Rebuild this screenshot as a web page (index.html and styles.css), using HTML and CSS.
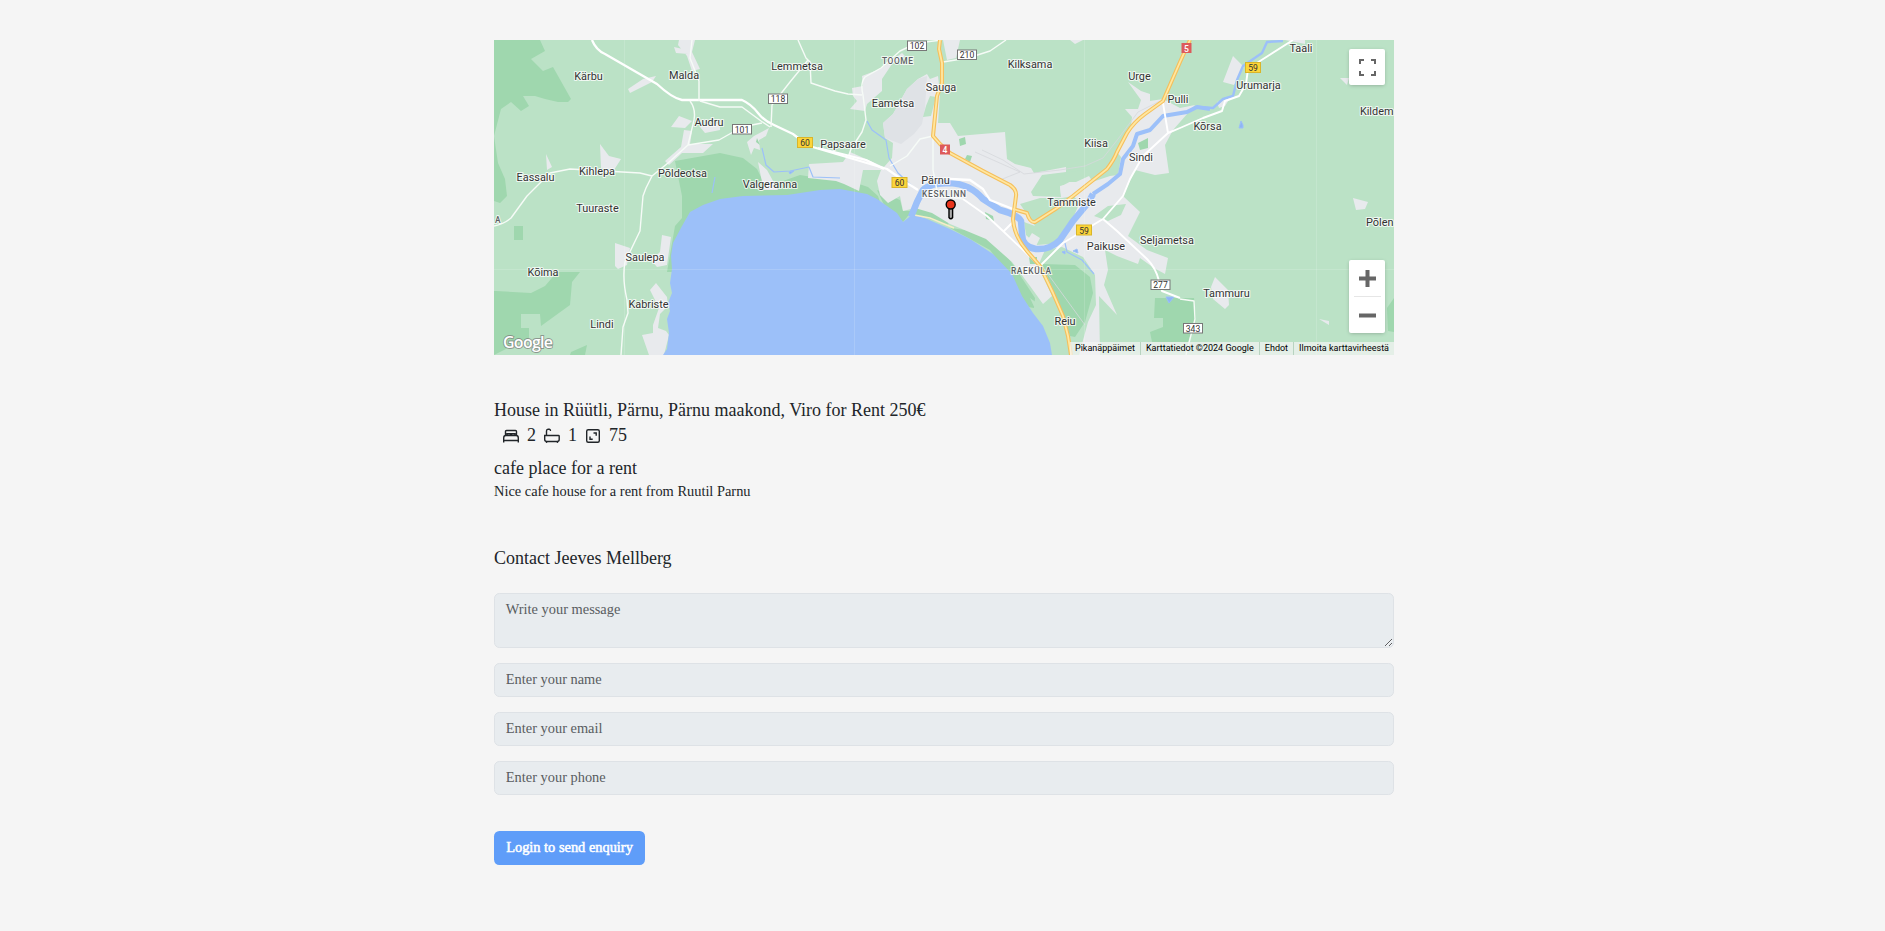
FILE: index.html
```html
<!DOCTYPE html>
<html lang="en">
<head>
<meta charset="utf-8">
<title>House in Rüütli, Pärnu</title>
<link rel="stylesheet" href="styles.css">
</head>
<body>
<main class="listing">
  <section class="map">
    <svg class="map-canvas" viewBox="494 40 900 315" width="900" height="315">
      <rect class="land" x="494" y="40" width="900" height="315"/>
      <g class="forest">
        <path d="M494 40H540L545 51 531 59 543 71 553 67 571 99 568 102 558 102 545 99 535 96 523 96 529 106 521 111 511 102 501 109 494 136Z"/>
        <path d="M494 136L498 163 505 179 507 196 500 203 494 201Z"/>
        <path d="M514 226H523V240H514Z"/>
        <path d="M496 291L531 293 545 286 557 272 580 272 572 282 570 305 541 326 540 314 521 314V328L529 328V338L512 346 494 355V291Z"/>
        <path d="M571 352L587 345 585 355H570Z"/>
        <path d="M675 161L720 153 743 158 757 169 766 187 800 175 812 177 850 181 868 187 878 196 880 202 840 195 740 200 700 212 680 232 672 272H667L675 226 682 218V196Z"/>
        <path d="M877 190L900 200 903 211H912L903 222 885 207Z"/>
        <path d="M916 199L930 203 950 212 948 225 914 214Z"/>
        <path d="M950 228L980 232 1000 246 1014 266 1035 298 1034 308 1028 307 1012 280 990 250Z"/>
        <path d="M1155 298H1194L1196 318 1188 342H1152L1150 332 1163 327V318H1154Z"/>
        <path d="M1387 308L1394 298V332L1388 331Z"/>
      </g>
      <g class="town">
        <path d="M679 40H695L692 52 700 69 692 71 687 56 678 45ZM674 47L687 50 688 54 676 53ZM628 89L643 79 656 76 652 82 630 93Z"/>
        <path d="M671 127L679 116 692 121 685 128ZM684 130L692 131 690 144 713 144 703 153 682 153 669 165 665 161 681 147ZM700 127L720 123V130L705 133Z"/>
        <path d="M600 144L609 156 621 159 614 170 601 168ZM546 154L552 167 547 170Z"/>
        <path d="M615 243L630 248 627 265 618 269 615 266ZM662 235L671 237 667 265 657 267 651 260 660 252ZM650 290L656 283 667 297 668 306 660 314 658 328 666 331 669 335 664 355H649L642 335 653 333 653 325 659 308Z"/>
        <path d="M747 142L754 136 769 128 766 136 759 140 760 150 754 148 751 155ZM758 162L767 170 778 190H764L761 177Z"/>
        <path d="M852 88L863 86 862 76 880 69 902 53 905 56 892 64 882 79V91L867 104 865 111 850 109 857 101 853 96ZM943 40H960L956 58 947 60Z"/>
        <path d="M883 123L893 114 907 89 918 79 927 74 930 79 938 76 940 93 938 123 950 123 958 136 1005 132 1007 159 1015 164 1031 168 1034 173 1066 167V172L1042 175 1031 192 1033 196 1061 197 1060 187 1077 178 1091 177 1107 165 1120 145 1131 126 1132 117 1125 109 1138 109 1141 100 1128 82 1141 91 1150 94V101L1163 99 1180 108 1195 105 1173 130 1165 145 1169 173 1155 175 1135 170 1123 196 1140 212 1128 236 1147 250 1168 258 1165 274 1154 268 1140 258 1138 264 1117 256 1105 250 1108 270 1104 285 1117 315 1099 296 1100 355H1079L1088 322 1096 305 1095 275 1083 257 1062 247 1045 250 1038 266 1052 296 1043 304 1030 286 1012 262 986 239 950 224 932 213 915 208 903 211 900 196 888 203 880 195 877 181 881 170 863 170 859 191 844 184 836 181 808 178 809 164 843 162 850 152 884 167 892 158 893 143 885 138Z"/>
        <path d="M1070 40H1083L1075 44ZM1233 56L1244 67 1234 85 1223 82ZM1217 102L1230 98 1225 106 1219 108ZM1285 40H1305V44ZM1340 78H1349L1347 85Z"/>
        <path d="M1215 277L1228 290 1229 305 1225 309 1213 299 1211 287ZM1319 319L1329 321 1329 325Z"/>
        <path d="M1353 198L1368 202 1365 209 1356 210Z"/>
      </g>
      <path class="airfield" d="M883 123L893 114 907 89 918 79 927 76 925 108 922 124 914 134 901 144 885 138Z"/>
      <g class="land">
        <path d="M930 96L936 97 931 116 923 117 926 106Z"/>
        <path d="M1020 204L1040 198 1062 198 1073 196 1080 202 1062 243 1037 245 1026 235 1024 222 1035 226ZM1094 216L1108 206 1126 204 1121 215 1108 221ZM1102 147L1112 146 1121 157 1118 175 1110 176 1092 182 1063 182 1065 173 1088 169Z"/>
        <path d="M1030 298L1037 303 1047 309 1058 299 1063 320 1070 355H1052L1043 326Z"/>
      </g>
      <path class="town" d="M1027 241L1032 233 1040 238 1036 246ZM1076 182L1089 176 1094 184 1084 195 1061 195 1060 186Z"/>
      <path class="forest" d="M959 139L965 137 966 144 960 146ZM967 155L972 156 970 162 965 159ZM1138 143L1148 138V148L1140 150ZM757 138L760 145 756 142ZM1042 264L1075 265 1090 277 1093 293 1085 322 1075 337 1070 336 1060 306ZM985 212L993 216 994 221 986 219ZM1029 257H1037V264H1030Z"/>
      <path class="sea" d="M720 199L703 205 690 212 682 226 673 243 671 256 672 269 670 283 672 293 668 303 670 311 667 319 669 333 667 349 663 355H1052L1050 343 1043 326 1033 313 1022 296 1012 274 993 254 970 239 950 229 927 219 913 214 903 222 897 213 887 206 877 199 867 194 840 189 820 190 787 195 743 196Z"/>
      <path class="beach" d="M914 215L930 218 954 228"/>
      <g class="river">
        <path class="wide" d="M1093 194L1088 203 1073 221 1060 240Q1050 250 1036 249 1022 247 1022 234L1021 221Q1018 215 1000 210L983 199Q970 184 950 183 930 183 923 190L917 202 911 217"/>
        <path class="mid" d="M1210 109L1197 107 1187 112 1163 116 1150 130 1137 134 1133 146 1123 159 1120 174 1108 184 1093 194"/>
        <path d="M1283 41L1267 42 1262 53 1243 66 1237 80 1233 96 1223 99 1213 108 1197 107"/>
        <path class="thin" d="M867 121L872 130 886 140 889 158 898 173 913 187M762 148L766 165 774 172 790 171 809 167 813 177 840 178M1065 243L1067 252 1082 260 1094 274M715 177L712 193"/>
        <path class="pool" d="M1239 128L1241 121 1243 125V128ZM1073 251L1077 249 1078 253ZM1166 297L1174 297 1169 303ZM789 172L794 171 790 174ZM1062 252L1065 251 1065 254Z"/>
      </g>
      <path class="railway" d="M982 150L1003 160 1024 174 1060 170 1085 166 1103 158 1118 139 1138 112 1160 101M975 152L1020 172 1000 180M1042 266L1085 325"/>
      <g class="road">
        <path class="major" d="M592 40Q596 50 605 54L657 84Q672 98 682 100H742Q751 104 758 113 764 121 774 125L793 134Q799 138 806 145L860 161 887 169 907 183 918 190"/>
        <path class="major" d="M818 148L866 160 884 169M950 179L970 180 983 189 990 200 1013 209"/>
        <path class="medium" d="M1293 40L1260 61 1248 69 1246 84 1239 96 1225 101 1222 111 1203 118 1180 128 1168 133 1143 156 1130 179 1123 196 1103 219 1063 243 1040 266M1163 103L1168 133M1103 219L1117 231 1147 259Q1156 268 1159 281L1162 291 1180 298M963 199L987 216 1003 231 1040 266M1003 232L1013 222 1013 209"/>
        <path d="M933 136L920 139 907 156 890 166M933 136V170L938 196 963 199M1180 299L1194 301 1195 319 1186 355"/>
        <path d="M692 40L690 58 699 81V101M700 101L720 107H742L761 121 770 127M690 101Q696 109 694 120L688 145 668 163 652 176 646 188 643 196 640 231 625 262Q622 278 627 300L628 313 623 327 621 355M688 145L719 140 742 127 762 123M798 40L806 58 810 62 811 83 835 91 848 94 862 95M808 60L790 82 772 105 771 127M942 40 917 43 900 51 881 68 865 77Q860 83 863 95L866 120 862 132 851 149 849 155M652 176L640 173 570 169 550 173 540 183 527 196 511 218Q504 224 494 226M943 62L968 58 990 51 1006 40"/>
      </g>
      <g class="highway" id="highways">
        <path id="hw4" d="M940 40L939 49 942 63V83L937 96 933 136 940 144 950 153 983 171 1010 185Q1017 190 1016 196L1013 219Q1014 236 1027 251L1040 266 1053 293 1063 316 1068 336 1071 355"/>
        <path id="hw59" d="M1013 209L1027 213Q1030 223 1035 222L1057 208 1073 196 1107 169Q1114 160 1117 152L1127 133Q1134 122 1145 114L1163 101 1180 62 1190 40"/>
      </g>
      <g class="highway-core">
        <path d="M940 40L939 49 942 63V83L937 96 933 136 940 144 950 153 983 171 1010 185Q1017 190 1016 196L1013 219Q1014 236 1027 251L1040 266 1053 293 1063 316 1068 336 1071 355"/>
        <path d="M1013 209L1027 213Q1030 223 1035 222L1057 208 1073 196 1107 169Q1114 160 1117 152L1127 133Q1134 122 1145 114L1163 101 1180 62 1190 40"/>
      </g>
      <path class="tile-seams" d="M494 269.5H1394M624.500 40V355M854.500 40V355M1084.500 40V355M1316.500 40V355"/>
      <g class="shield">
        <rect x="907.500" y="41" width="19" height="9.500"/><text x="917" y="49">102</text>
        <rect x="957.500" y="50" width="19" height="9.500"/><text x="967" y="58">210</text>
        <rect x="768.500" y="94" width="19" height="9.500"/><text x="778" y="102">118</text>
        <rect x="732.500" y="124.500" width="19" height="9.500"/><text x="742" y="132.500">101</text>
        <rect x="1151" y="280" width="19" height="9.500"/><text x="1160.500" y="288">277</text>
        <rect x="1183.500" y="323.500" width="19" height="9.500"/><text x="1193" y="331.500">343</text>
      </g>
      <g class="shield yellow">
        <rect x="797.500" y="137.500" width="15" height="10"/><text x="805" y="146">60</text>
        <rect x="892" y="177.500" width="15" height="10"/><text x="899.500" y="186">60</text>
        <rect x="1245.500" y="62.500" width="15" height="10"/><text x="1253" y="71">59</text>
        <rect x="1076.500" y="225" width="15" height="10"/><text x="1084" y="233.500">59</text>
      </g>
      <g class="shield red">
        <rect x="940.500" y="145" width="9" height="9"/><text x="945" y="153">4</text>
        <rect x="1182" y="43.500" width="9" height="9"/><text x="1186.500" y="51.500">5</text>
      </g>
      <g class="place">
        <text x="588.500" y="80">Kärbu</text><text x="684" y="78.500">Malda</text>
        <text x="709" y="126">Audru</text><text x="597" y="175">Kihlepa</text>
        <text x="535.500" y="181">Eassalu</text><text x="682.500" y="176.500">Põldeotsa</text>
        <text x="797" y="69.500">Lemmetsa</text><text x="893" y="106.500">Eametsa</text>
        <text x="941" y="91">Sauga</text><text x="843" y="148">Papsaare</text>
        <text x="770" y="188">Valgeranna</text><text x="935.500" y="184">Pärnu</text>
        <text x="1030" y="68">Kilksama</text><text x="1139.500" y="80">Urge</text>
        <text x="1178" y="103">Pulli</text><text x="1096" y="147">Kiisa</text>
        <text x="1141" y="160.500">Sindi</text><text x="1301" y="51.500">Taali</text>
        <text x="1258.500" y="88.500">Urumarja</text><text x="1207.500" y="129.500">Kõrsa</text>
        <text x="597.500" y="212">Tuuraste</text><text x="645" y="261">Saulepa</text>
        <text x="543" y="275.500">Kõima</text><text x="648.500" y="308">Kabriste</text>
        <text x="602" y="327.500">Lindi</text><text x="1071.500" y="206">Tammiste</text>
        <text x="1106" y="250">Paikuse</text><text x="1167" y="244">Seljametsa</text>
        <text x="1065" y="325">Reiu</text><text x="1226.500" y="297">Tammuru</text>
        <text class="at-edge" x="1393.500" y="114.500">Kildem</text><text class="at-edge" x="1393.500" y="226">Põlen</text>
      </g>
      <g class="district">
        <text x="882" y="64" textLength="31">TOOME</text>
        <text x="922" y="197" textLength="44">KESKLINN</text>
        <text x="1011" y="274" textLength="40">RAEKÜLA</text>
        <text x="495" y="223">A</text>
      </g>
      <g class="pin">
        <path class="pin-stem" d="M949 207H952.600V217.500Q950.800 220 949 217.500Z"/>
        <circle cx="950.700" cy="204.500" r="4.500"/>
      </g>
      <text class="google" x="503" y="348" textLength="50">Google</text>
    </svg>
    <button class="map-control fullscreen" aria-label="Fullscreen">
      <svg width="18" height="18" viewBox="0 0 18 18"><path d="M2 6V2H6M13 2H17V6M17 13V17H13M6 17H2V13"/></svg>
    </button>
    <div class="map-control zoom">
      <svg width="36" height="36" viewBox="0 0 36 36"><path d="M10 18.500H27M18.500 10V27"/></svg>
      <span class="zoom-divider"></span>
      <svg width="36" height="36" viewBox="0 0 36 36"><path d="M10 18.500H27"/></svg>
    </div>
    <div class="attribution"><span>Pikanäppäimet</span><span>Karttatiedot ©2024 Google</span><span>Ehdot</span><span>Ilmoita karttavirheestä</span></div>
  </section>

  <section class="details">
    <h1 class="title">House in Rüütli, Pärnu, Pärnu maakond, Viro for Rent 250€</h1>
    <div class="features">
      <span class="feature bed"><svg width="18" height="18" viewBox="0 0 18 18"><path d="M3.500 8.500V4.500Q3.500 3.500 4.500 3.500H13.500Q14.500 3.500 14.500 4.500V8.500M5 8V6.700H8.500V8M9.500 8V6.700H13V8M1.700 15.500V11Q1.700 8.500 3.700 8.500H14.300Q16.300 8.500 16.300 11V15.500M1.700 13.500H16.300"/></svg>2</span>
      <span class="feature bath"><svg width="18" height="18" viewBox="0 0 18 18"><path d="M3.500 9V4Q3.500 2.200 5 2.200H6.500Q7.500 2.200 7.500 4M2 8.500H15.500Q16.200 8.500 16.200 9.200V12.500Q16.200 14.500 14 14.500H4Q1.700 14.500 1.700 12.500V8.500ZM3.500 14.500V16M14.500 14.500V16"/></svg>1</span>
      <span class="feature area"><svg width="18" height="18" viewBox="0 0 18 18"><rect x="2.700" y="2.700" width="12.600" height="12.600" rx="1.500"/><path d="M9.500 6H12.200V8.700M6 9.500V12.200H8.700"/></svg>75</span>
    </div>
    <h2 class="subtitle">cafe place for a rent</h2>
    <p class="description">Nice cafe house for a rent from Ruutil Parnu</p>
  </section>

  <form class="contact">
    <h2 class="contact-title">Contact Jeeves Mellberg</h2>
    <textarea class="field message" placeholder="Write your message"></textarea>
    <input class="field" type="text" placeholder="Enter your name">
    <input class="field" type="text" placeholder="Enter your email">
    <input class="field" type="text" placeholder="Enter your phone">
    <button class="submit" type="button">Login to send enquiry</button>
  </form>
</main>
</body>
</html>
```

FILE: styles.css
```css
* { box-sizing: border-box; }
body { margin: 0; background: #f5f5f5; color: #212529; font: 14.4px/21.6px "Liberation Serif", "Times New Roman", serif; }
h1, h2, p { margin: 0; font-weight: 400; }
.listing { width: 900px; margin: 0 0 0 494px; padding-top: 40px; }

.map { position: relative; height: 315px; overflow: hidden; font-family: Roboto, sans-serif; }
.map-canvas { display: block; }
.land { fill: #bbe2c6; }
.forest { fill: #9fd7ae; }
.town { fill: #e8eaed; }
.airfield { fill: #dfe2e6; }
.sea { fill: #9cc0f9; }
.beach { fill: none; stroke: #f6edc6; stroke-width: 1.5; }
.river path { fill: none; stroke: #9cc0f9; stroke-width: 2.4; stroke-linejoin: round; }
.river .wide { stroke-width: 6.5; }
.river .mid { stroke-width: 4; }
.river .thin { stroke-width: 1.2; }
.river .pool { fill: #8fb5f5; stroke-width: 1; }
.railway { fill: none; stroke: #d5d8dc; stroke-width: .8; }
.road path { fill: none; stroke: #f6fbf7; stroke-width: 1.4; stroke-linejoin: round; }
.road .medium { stroke: #fff; stroke-width: 1.9; }
.road .major { stroke: #fff; stroke-width: 2.3; }
.highway { fill: none; stroke: #f5bf5c; stroke-width: 4; stroke-linejoin: round; }
.highway-core { fill: none; stroke: #ffe7a0; stroke-width: 1.8; stroke-linejoin: round; }
.tile-seams { fill: none; stroke: #fff; stroke-opacity: .14; }
.shield { font-size: 8.6px; text-anchor: middle; }
.shield rect { fill: #fff; stroke: #777; }
.shield text { fill: #333; }
.shield.yellow rect { fill: #fcd53a; stroke: #d9b52a; }
.shield.red rect { fill: #dd5b5b; stroke: #dd5b5b; }
.shield.red text { fill: #fff; font-weight: 500; }
.place { font-size: 10.9px; text-anchor: middle; fill: #333; stroke: #fff; stroke-opacity: .75; stroke-width: 2.2px; stroke-linejoin: round; paint-order: stroke; }
.place .at-edge { text-anchor: end; }
.district { font-size: 8.4px; font-weight: 500; fill: #5c5f63; stroke: #fff; stroke-opacity: .75; stroke-width: 2px; paint-order: stroke; }
.pin circle { fill: #e8341c; stroke: #000; stroke-width: 1.4; }
.pin-stem { fill: #aaa; stroke: #000; stroke-width: 1.4; }
.google { font: 600 16px "Open Sans", sans-serif; fill: #fff; stroke: #777; stroke-opacity: .7; stroke-width: 1.8px; paint-order: stroke; }

.map-control { position: absolute; right: 9px; width: 36px; background: #fff; border: 0; border-radius: 2px; box-shadow: 0 1px 4px -1px rgba(0, 0, 0, .3); }
.map-control path { fill: none; stroke: #666; }
.fullscreen { top: 9px; height: 36px; padding: 0; display: grid; place-items: center; }
.fullscreen path { stroke-width: 2; }
.zoom { bottom: 22px; height: 73px; display: flex; flex-direction: column; align-items: center; }
.zoom path { stroke-width: 4; }
.zoom-divider { width: 27px; height: 1px; background: #e6e6e6; }
.attribution { position: absolute; right: 0; bottom: 0; display: flex; height: 13px; font-size: 9px; line-height: 13px; color: #000; background: rgba(245, 245, 245, .7); white-space: nowrap; }
.attribution span { padding: 0 5px; }
.attribution span + span { border-left: 1px solid #b8d3c0; }

.details { padding-top: 45px; }
.title, .subtitle, .contact-title { font-size: 18px; line-height: 21.6px; }
.features { display: flex; align-items: center; height: 27px; margin-top: 1px; padding-left: 8px; font-size: 18px; }
.feature { display: flex; align-items: center; gap: 7px; }
.feature svg { fill: none; stroke: #212529; stroke-width: 1.4; }
.bath { margin-left: 7px; }
.area { margin-left: 7px; }
.subtitle { margin-top: 8px; }
.description { margin-top: 2px; }

.contact { padding-top: 45px; display: flex; flex-direction: column; align-items: flex-start; }
.contact-title { margin-bottom: 24px; }
.field { display: block; width: 100%; height: 34px; margin: 0 0 15px; padding: 4.4px 10.8px 6.4px; color: #212529; background: #e8ecef; border: 1px solid #dee2e6; border-radius: 5.4px; font: inherit; }
.field::placeholder { color: #595c5f; opacity: 1; }
.message { height: 55px; resize: vertical; }
.submit { height: 34px; width: 151px; margin-top: 21px; padding: 0 0 2px; border: 0; border-radius: 5.4px; background: #5f9df9; color: #fff; font: 14.4px/21.6px "Liberation Serif", "Times New Roman", serif; -webkit-text-stroke: .5px #fff; }
```
